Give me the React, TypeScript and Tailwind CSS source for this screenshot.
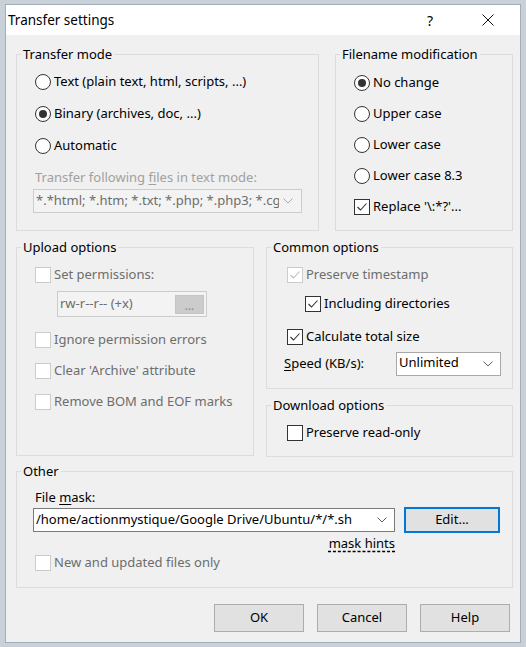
import React from "react";

type Kids = { children?: React.ReactNode };

function Radio({ checked }: { checked?: boolean }) {
  return (
    <svg width="16" height="16" viewBox="0 0 16 16" className="shrink-0">
      <circle cx="8" cy="8" r="7.5" fill="#ffffff" stroke="#333333" />
      {checked && <circle cx="8" cy="8" r="4" fill="#333333" />}
    </svg>
  );
}

function Box({ checked, disabled }: { checked?: boolean; disabled?: boolean }) {
  const edge = disabled ? "#cccccc" : "#333333";
  const tick = disabled ? "#bcbcbc" : "#333333";
  return (
    <svg width="16" height="16" viewBox="0 0 16 16" className="shrink-0">
      <rect x="0.5" y="0.5" width="15" height="15" fill="#ffffff" stroke={edge} />
      {checked && (
        <polyline points="3.5,8 6.5,11 12.5,4.5" fill="none" stroke={tick} strokeWidth="1.1" />
      )}
    </svg>
  );
}

function Chevron({ color = "#606060" }: { color?: string }) {
  return (
    <svg width="10" height="6" viewBox="0 0 10 6" className="shrink-0">
      <polyline points="0.5,0.5 5,5 9.5,0.5" fill="none" stroke={color} strokeWidth="1" />
    </svg>
  );
}

function Group({ title, className, children }: Kids & { title: string; className: string }) {
  return (
    <fieldset className={`border border-[#dcdcdc] ${className}`}>
      <legend className="ml-[4px] px-[2px] leading-[20px] text-black">{title}</legend>
      {children}
    </fieldset>
  );
}

function RadioRow({ label, checked, h }: { label: string; checked?: boolean; h: string }) {
  return (
    <div className={`flex items-center gap-[3px] ${h}`}>
      <Radio checked={checked} />
      <span>{label}</span>
    </div>
  );
}

function CheckRow({
  label,
  checked,
  disabled,
  h,
}: {
  label: string;
  checked?: boolean;
  disabled?: boolean;
  h: string;
}) {
  return (
    <div className={`flex items-center gap-[3px] ${h}`}>
      <Box checked={checked} disabled={disabled} />
      <span className={disabled ? "text-[#6d6d6d]" : "text-black"}>{label}</span>
    </div>
  );
}

function Button({ label, focused }: { label: string; focused?: boolean }) {
  return (
    <div
      className={`w-[90px] h-[28px] flex items-center justify-center bg-[#e1e1e1] ${
        focused ? "border-2 border-[#0078d7]" : "border border-[#adadad]"
      }`}
    >
      {label}
    </div>
  );
}

export default function App() {
  return (
    <div className="w-[526px] h-[647px] overflow-hidden bg-[#c9d0d8] pt-[4px] pl-[5px] font-['Noto_Sans',sans-serif] text-[13px] text-black">
      <div className="w-[516px] h-[639px] border border-[#a3adb8] bg-[#f0f0f0] flex flex-col">
        {/* title bar */}
        <div className="h-[30px] bg-white flex items-center shrink-0">
          <span className="pl-[2px] text-[13.5px]">Transfer settings</span>
          <span className="ml-auto text-[14px] mr-[49px]">?</span>
          <svg width="12" height="12" viewBox="0 0 12 12" className="mr-[26px]">
            <path d="M0.5 0.5 L11.5 11.5 M11.5 0.5 L0.5 11.5" stroke="#111111" strokeWidth="1" />
          </svg>
        </div>

        {/* dialog body */}
        <div className="flex-1 pl-[10px] pr-[7px] pt-[9px] flex flex-col">
          {/* first row */}
          <div className="flex gap-[16px]">
            <Group title="Transfer mode" className="w-[303px] h-[187px]">
              <div className="pl-[16px] pt-[2px] flex flex-col">
                <div className="pl-[2px]">
                  <RadioRow label="Text (plain text, html, scripts, ...)" h="h-[32px]" />
                  <RadioRow label="Binary (archives, doc, ...)" checked h="h-[32px]" />
                  <RadioRow label="Automatic" h="h-[32px]" />
                </div>
                <div className="pl-[2px] mt-[5px] h-[20px] leading-[20px] text-[#a0a0a0]">
                  Transfer following <span className="underline underline-offset-2">f</span>iles in text mode:
                </div>
                <div className="mt-[2px] w-[269px] h-[24px] border border-[#cccccc] bg-[#f3f3f3] flex items-center pl-[2px] pr-[8px]">
                  <span className="w-[243px] overflow-hidden whitespace-nowrap text-[#6d6d6d]">
                    *.*html; *.htm; *.txt; *.php; *.php3; *.cgi
                  </span>
                  <span className="ml-auto">
                    <Chevron color="#a8a8a8" />
                  </span>
                </div>
              </div>
            </Group>

            <Group title="Filename modification" className="w-[178px] h-[187px]">
              <div className="pl-[18px] pt-[3px] flex flex-col">
                <RadioRow label="No change" checked h="h-[31px]" />
                <RadioRow label="Upper case" h="h-[31px]" />
                <RadioRow label="Lower case" h="h-[31px]" />
                <RadioRow label="Lower case 8.3" h="h-[31px]" />
                <CheckRow label="Replace '\:*?'..." checked h="h-[31px]" />
              </div>
            </Group>
          </div>

          {/* second row */}
          <div className="flex gap-[12px] mt-[6px] items-start">
            <Group title="Upload options" className="w-[238px] h-[219px]">
              <div className="pl-[18px] pt-[3px] flex flex-col">
                <CheckRow label="Set permissions:" disabled h="h-[30px]" />
                <div className="ml-[22px] mt-[1px] w-[150px] h-[26px] border border-[#cccccc] bg-[#f3f3f3] flex items-center pl-[2px] pr-[2px]">
                  <span className="text-[#6d6d6d]">rw-r--r-- (+x)</span>
                  <div className="ml-auto w-[29px] h-[19px] bg-[#cccccc] border border-[#c4c4c4] flex items-center justify-center text-[#8a8a8a] text-[12px] leading-none pt-[3px]">
                    ...
                  </div>
                </div>
                <div className="mt-[7px] flex flex-col">
                  <CheckRow label="Ignore permission errors" disabled h="h-[31px]" />
                  <CheckRow label="Clear 'Archive' attribute" disabled h="h-[31px]" />
                  <CheckRow label="Remove BOM and EOF marks" disabled h="h-[31px]" />
                </div>
              </div>
            </Group>

            <div className="flex flex-col">
              <Group title="Common options" className="w-[247px] h-[152px]">
                <div className="pl-[20px] pt-[3px] flex flex-col">
                  <CheckRow label="Preserve timestamp" checked disabled h="h-[30px]" />
                  <div className="pl-[18px]">
                    <CheckRow label="Including directories" checked h="h-[28px]" />
                  </div>
                  <div className="mt-[4px]">
                    <CheckRow label="Calculate total size" checked h="h-[30px]" />
                  </div>
                  <div className="flex items-center h-[24px] ml-[-3px]">
                    <span className="w-[112px]">
                      <span className="underline underline-offset-2">S</span>peed (KB/s):
                    </span>
                    <div className="w-[105px] h-[24px] border border-[#a9a9a9] bg-white flex items-center pl-[2px] pr-[7px]">
                      <span className="mt-[-2px]">Unlimited</span>
                      <span className="ml-auto">
                        <Chevron />
                      </span>
                    </div>
                  </div>
                </div>
              </Group>

              <Group title="Download options" className="w-[247px] h-[62px] mt-[6px]">
                <div className="pl-[20px] pt-[3px]">
                  <CheckRow label="Preserve read-only" h="h-[30px]" />
                </div>
              </Group>
            </div>
          </div>

          {/* third row */}
          <Group title="Other" className="w-[497px] h-[127px] mt-[4px]">
            <div className="pl-[16px] pt-[6px] flex flex-col">
              <div className="pl-[2px] h-[20px] leading-[20px]">
                File <span className="underline underline-offset-2">m</span>ask:
              </div>
              <div className="flex items-center h-[26px] gap-[9px]">
                <div className="w-[362px] h-[24px] border border-[#7a7a7a] bg-white flex items-center pl-[2px] pr-[7px]">
                  <span className="whitespace-nowrap">/home/actionmystique/Google Drive/Ubuntu/*/*.sh</span>
                  <span className="ml-auto">
                    <Chevron />
                  </span>
                </div>
                <div className="w-[96px] h-[26px] border-2 border-[#0078d7] bg-[#e1e1e1] flex items-center justify-center">
                  Edit...
                </div>
              </div>
              <div className="w-[362px] h-[20px] leading-[20px] text-right">
                <span className="underline decoration-dashed underline-offset-[3px]">mask hints</span>
              </div>
              <div className="pl-[2px]">
                <CheckRow label="New and updated files only" disabled h="h-[20px]" />
              </div>
            </div>
          </Group>

          {/* buttons */}
          <div className="mt-[16px] flex justify-end gap-[13px] pr-[3px]">
            <Button label="OK" />
            <Button label="Cancel" />
            <Button label="Help" />
          </div>
        </div>
      </div>
    </div>
  );
}
